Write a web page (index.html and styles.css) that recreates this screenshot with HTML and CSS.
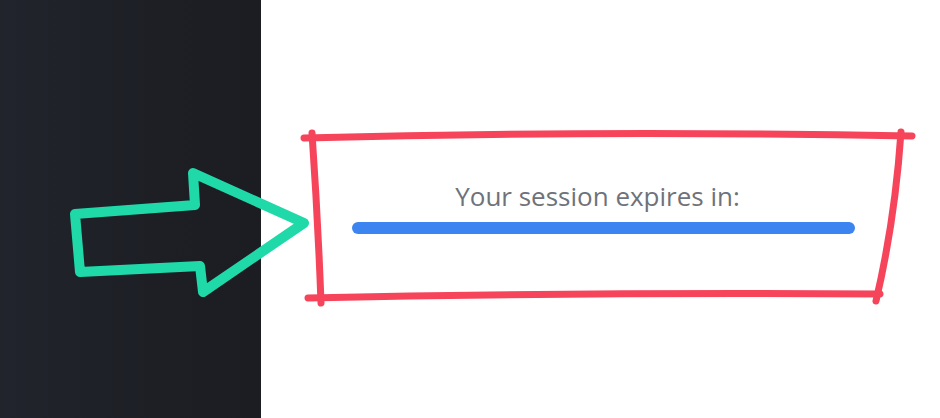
FILE: index.html
```html
<!DOCTYPE html>
<html>
<head>
<meta charset="utf-8">
<link rel="stylesheet" href="styles.css">
</head>
<body>
<div class="page">
  <aside class="sidebar"></aside>
  <main class="main">
    <section class="session">
      <p class="session-label">Your session expires in:</p>
      <div class="session-bar"></div>
    </section>
  </main>
  <svg class="annotations" width="940" height="418" viewBox="0 0 940 418" fill="none" stroke-linecap="round" stroke-linejoin="round">
    <path d="M75 214 L195 205 L193 173 L304 223 L203 292 L200 266 L80 272 Z" stroke="#1fd9a9" stroke-width="10"/>
    <path d="M304 138 Q600 130 912 136" stroke="#f6455b" stroke-width="7"/>
    <path d="M312 133 Q318 220 321 303" stroke="#f6455b" stroke-width="7"/>
    <path d="M308 298 Q600 292 880 294" stroke="#f6455b" stroke-width="7"/>
    <path d="M901 132 Q895 220 876 301" stroke="#f6455b" stroke-width="7"/>
  </svg>
</div>
</body>
</html>
```
FILE: styles.css
```css
html, body {
  margin: 0;
  padding: 0;
  width: 940px;
  height: 418px;
  overflow: hidden;
  background: #ffffff;
}
.page {
  position: relative;
  display: flex;
  width: 940px;
  height: 418px;
}
.sidebar {
  width: 261px;
  flex: none;
  background: linear-gradient(90deg, #21242c 0%, #1d1f25 60%, #1c1d22 100%);
}
.main {
  flex: 1;
  background: #ffffff;
  padding-top: 179px;
  padding-left: 91px;
}
.session {
  width: 503px;
  display: flex;
  flex-direction: column;
  align-items: center;
}
.session-label {
  margin: 0 0 0 -12px;
  font-family: "Open Sans", sans-serif;
  font-size: 26px;
  line-height: 34px;
  color: #6e727a;
}
.session-bar {
  margin-top: 9px;
  width: 503px;
  height: 12px;
  border-radius: 6px;
  background: #3c84f0;
}
.annotations {
  position: absolute;
  left: 0;
  top: 0;
  pointer-events: none;
}
```
